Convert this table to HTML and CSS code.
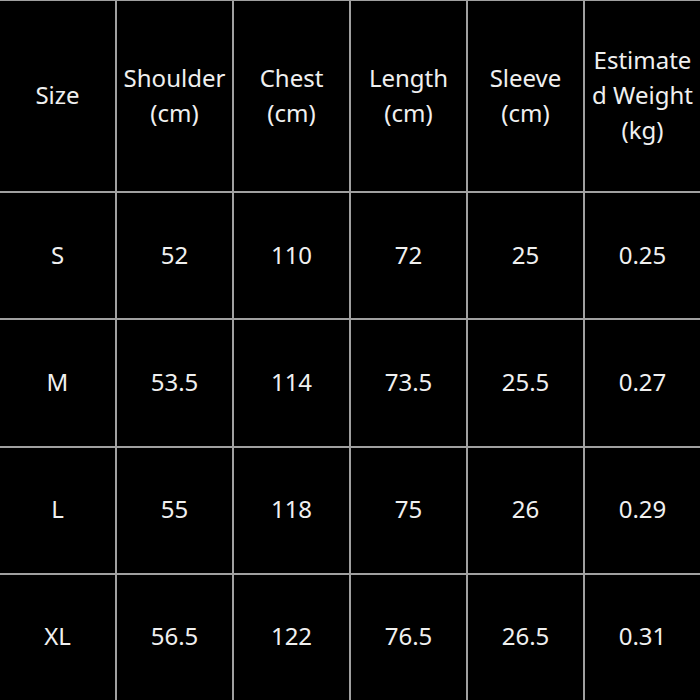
FILE: index.html
```html
<!DOCTYPE html>
<html>
<head>
<meta charset="utf-8">
<link rel="stylesheet" href="styles.css">
</head>
<body>
<div class="table">
  <div class="cell head">Size</div>
  <div class="cell head">Shoulder<br>(cm)</div>
  <div class="cell head">Chest<br>(cm)</div>
  <div class="cell head">Length<br>(cm)</div>
  <div class="cell head">Sleeve<br>(cm)</div>
  <div class="cell head">Estimate<br>d Weight<br>(kg)</div>

  <div class="cell">S</div>
  <div class="cell">52</div>
  <div class="cell">110</div>
  <div class="cell">72</div>
  <div class="cell">25</div>
  <div class="cell">0.25</div>

  <div class="cell">M</div>
  <div class="cell">53.5</div>
  <div class="cell">114</div>
  <div class="cell">73.5</div>
  <div class="cell">25.5</div>
  <div class="cell">0.27</div>

  <div class="cell">L</div>
  <div class="cell">55</div>
  <div class="cell">118</div>
  <div class="cell">75</div>
  <div class="cell">26</div>
  <div class="cell">0.29</div>

  <div class="cell">XL</div>
  <div class="cell">56.5</div>
  <div class="cell">122</div>
  <div class="cell">76.5</div>
  <div class="cell">26.5</div>
  <div class="cell">0.31</div>
</div>
</body>
</html>
```
FILE: styles.css
```css
html, body {
  margin: 0;
  padding: 0;
  background: #000;
}
.table {
  width: 700px;
  height: 700px;
  box-sizing: border-box;
  padding-top: 1px;
  background: #a0a0a0;
  display: grid;
  grid-template-columns: repeat(6, 1fr);
  grid-template-rows: 190px repeat(4, 1fr);
  gap: 2px;
  font-family: "Noto Sans", "Open Sans", sans-serif;
  font-size: 24px;
  line-height: 35px;
  color: #f0f0f0;
}
.cell {
  background: #000;
  display: flex;
  align-items: center;
  justify-content: center;
  text-align: center;
  padding-bottom: 3px;
}
```
